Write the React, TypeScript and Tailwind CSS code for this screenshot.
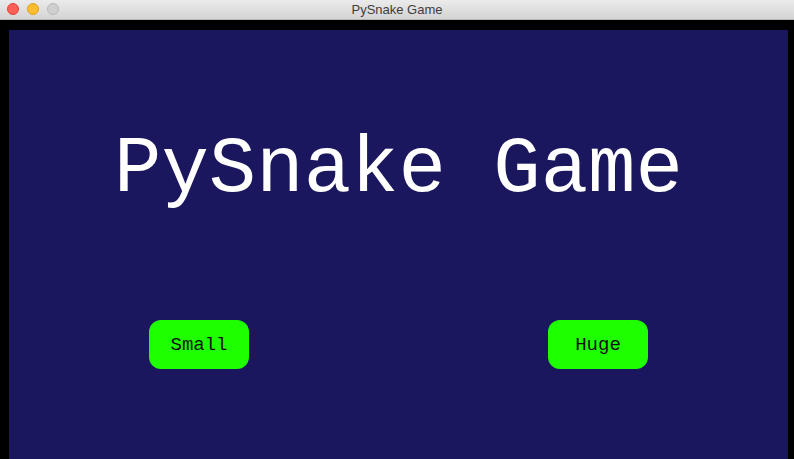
import React from 'react'

const mono = { fontFamily: '"Liberation Mono", "Courier New", monospace' }

const TrafficLights = () => (
  <div className="absolute left-[7px] top-[3px] flex gap-[8px]">
    <span className="block h-[12px] w-[12px] rounded-full border border-[#e0443e] bg-[#fe5f57]" />
    <span className="block h-[12px] w-[12px] rounded-full border border-[#dea123] bg-[#febc2e]" />
    <span className="block h-[12px] w-[12px] rounded-full border border-[#b8b8b8] bg-[#cfcfcf]" />
  </div>
)

const MenuButton = ({ label }: { label: string }) => (
  <button
    className="flex h-[49px] w-[100px] items-center justify-center rounded-[12px] bg-[#1eff00] pt-[1px] text-[19px] text-[#111]"
    style={mono}
  >
    {label}
  </button>
)

export default function App() {
  return (
    <div className="flex h-[459px] w-[794px] flex-col overflow-hidden bg-black">
      <div className="relative flex h-[20px] shrink-0 items-center justify-center border-b border-[#b5b5b5] bg-gradient-to-b from-[#ebebeb] to-[#d4d4d4]">
        <TrafficLights />
        <span
          className="text-[13px] text-[#3d3d3d]"
          style={{ fontFamily: '"Liberation Sans", Arial, sans-serif' }}
        >
          PySnake Game
        </span>
      </div>
      <div className="flex flex-1 pl-[9px] pr-[6px] pt-[10px]">
        <div className="flex flex-1 flex-col bg-[#1a175f]">
          <h1
            className="pt-[101px] text-center text-[79px] leading-none text-white"
            style={mono}
          >
            PySnake Game
          </h1>
          <div className="mt-[110px] flex gap-[299px] pl-[140px]">
            <MenuButton label="Small" />
            <MenuButton label="Huge" />
          </div>
        </div>
      </div>
    </div>
  )
}
